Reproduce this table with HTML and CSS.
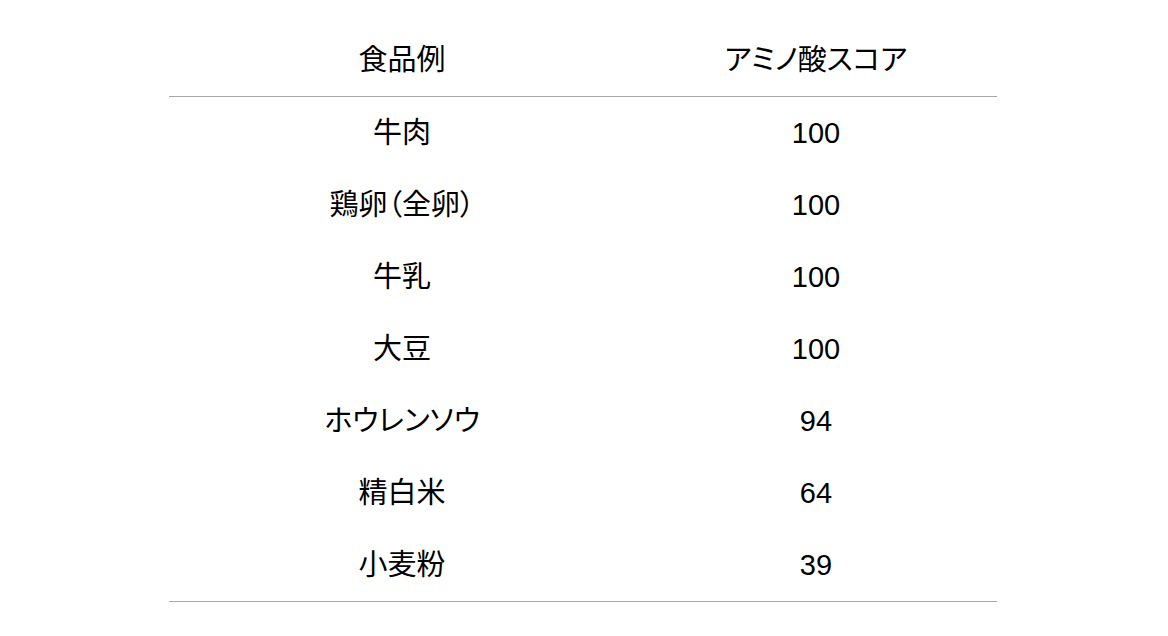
FILE: index.html
```html
<!DOCTYPE html>
<html lang="ja">
<head>
<meta charset="utf-8">
<link rel="stylesheet" href="styles.css">
</head>
<body>
<div class="page">
  <div class="table">
    <div class="row head">
      <div class="cell">食品例</div>
      <div class="cell">アミノ酸スコア</div>
    </div>
    <div class="body">
      <div class="row"><div class="cell">牛肉</div><div class="cell">100</div></div>
      <div class="row"><div class="cell">鶏卵（全卵）</div><div class="cell">100</div></div>
      <div class="row"><div class="cell">牛乳</div><div class="cell">100</div></div>
      <div class="row"><div class="cell">大豆</div><div class="cell">100</div></div>
      <div class="row"><div class="cell">ホウレンソウ</div><div class="cell">94</div></div>
      <div class="row"><div class="cell">精白米</div><div class="cell">64</div></div>
      <div class="row"><div class="cell">小麦粉</div><div class="cell">39</div></div>
    </div>
  </div>
</div>
</body>
</html>
```
FILE: styles.css
```css
html, body {
  margin: 0;
  padding: 0;
  background: #ffffff;
}
.page {
  padding-top: 24px;
  padding-left: 169px;
}
.table {
  width: 828px;
  font-family: "Liberation Sans", "Noto Sans CJK JP", sans-serif;
  font-size: 29px;
  color: #000000;
  font-feature-settings: "palt";
}
.row {
  display: grid;
  grid-template-columns: 466px 362px;
  height: 72px;
  align-items: center;
}
.head {
  border-bottom: 1px solid #a8a8a8;
  height: 72px;
}
.body {
  border-bottom: 1px solid #a8a8a8;
}
.cell {
  text-align: center;
  line-height: 1;
}
```
